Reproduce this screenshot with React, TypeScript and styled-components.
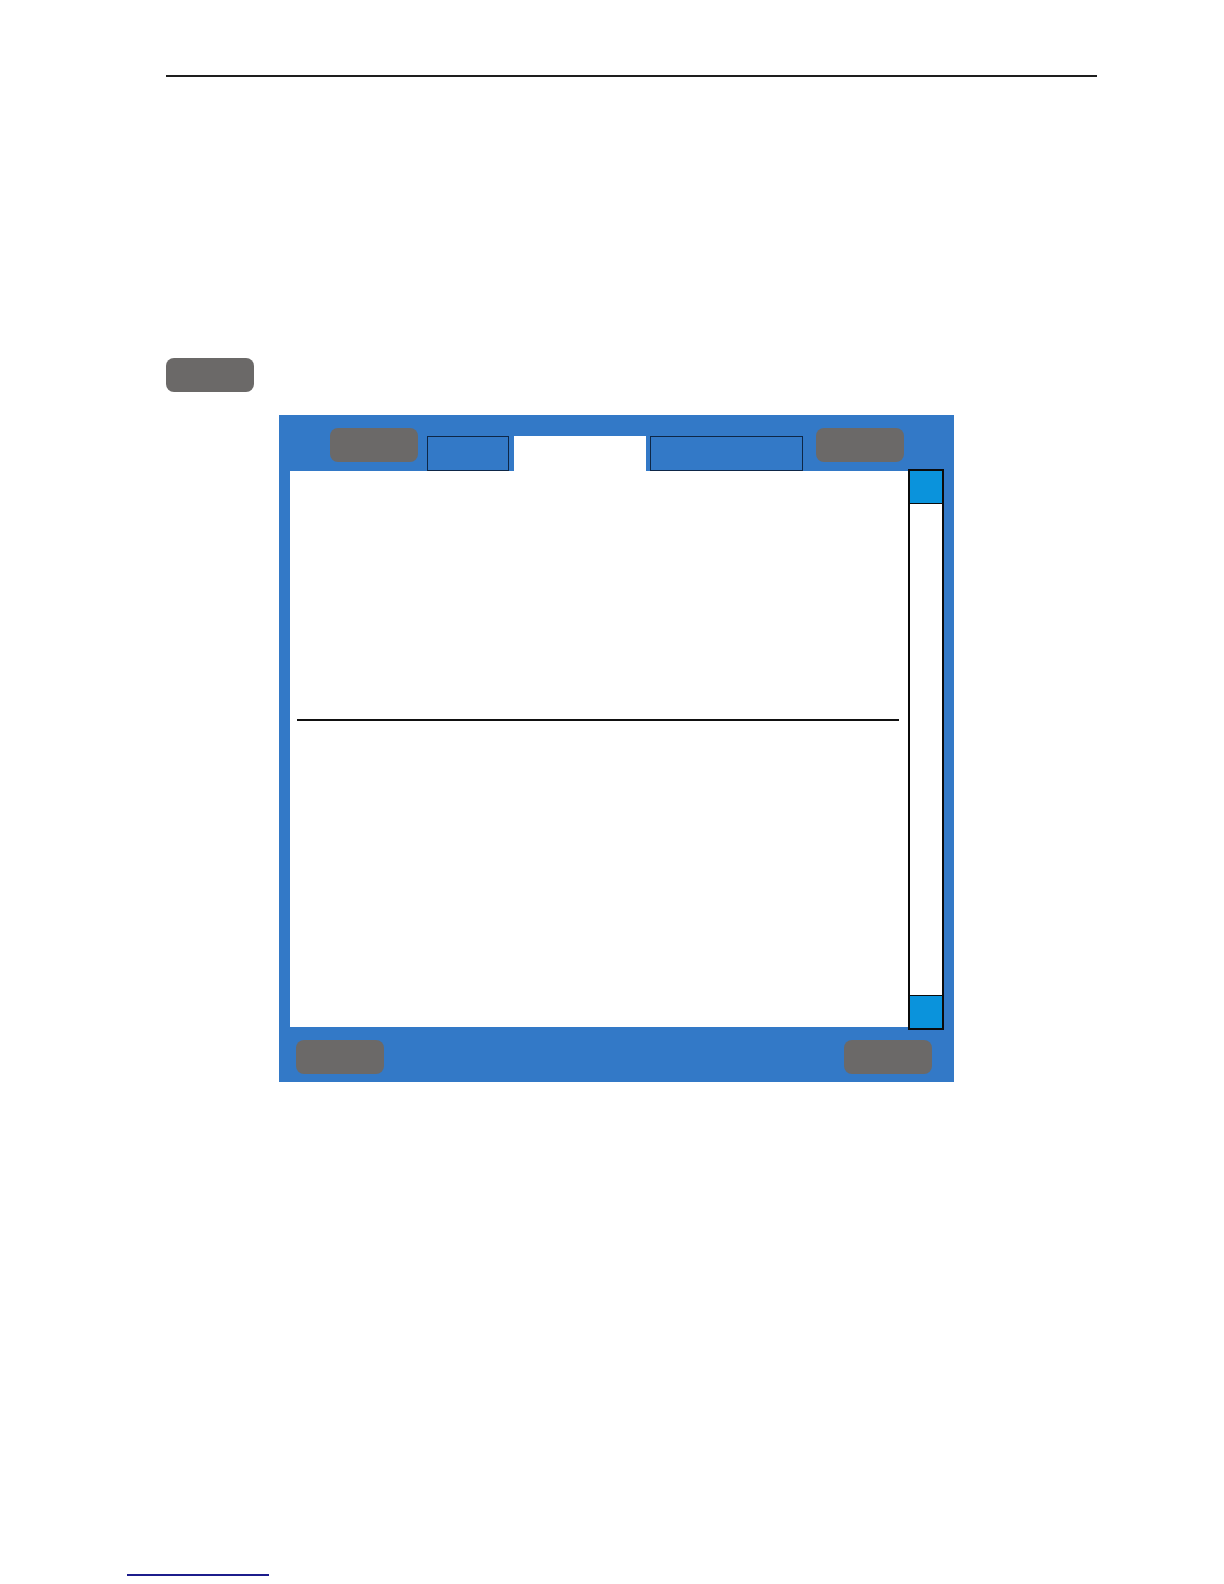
import React from 'react';
import styled, { createGlobalStyle } from 'styled-components';

const GlobalStyle = createGlobalStyle`
  html, body {
    margin: 0;
    padding: 0;
    background: #ffffff;
    font-family: "Liberation Sans", Arial, sans-serif;
  }
`;

const Page = styled.div`
  position: relative;
  width: 1224px;
  height: 1584px;
  padding-top: 75px;
  box-sizing: border-box;
`;

const TopRule = styled.div`
  margin-left: 166px;
  width: 931px;
  height: 2px;
  background: #1e1e1e;
`;

const GreyButton = styled.div`
  width: 88px;
  height: 34px;
  border-radius: 8px;
  background: #6b6968;
  flex-shrink: 0;
`;

const LoneButton = styled(GreyButton)`
  margin-left: 166px;
  margin-top: 281px;
`;

const Panel = styled.div`
  margin-left: 279px;
  margin-top: 23px;
  width: 675px;
  height: 667px;
  background: #3379c7;
  display: flex;
  flex-direction: column;
`;

const TopBar = styled.div`
  height: 56px;
  display: flex;
  align-items: flex-end;
  padding-left: 51px;
  box-sizing: border-box;
`;

const TopButton = styled(GreyButton)<{ $gap?: number }>`
  align-self: flex-start;
  margin-top: 13px;
  margin-left: ${p => p.$gap || 0}px;
`;

const Tab = styled.div<{ $w: number; $active?: boolean; $gap: number }>`
  width: ${p => p.$w}px;
  height: 35px;
  margin-left: ${p => p.$gap}px;
  box-sizing: border-box;
  background: ${p => (p.$active ? '#ffffff' : '#3379c7')};
  border: ${p => (p.$active ? 'none' : '1.5px solid #0e2747')};
  flex-shrink: 0;
`;

const Body = styled.div`
  display: flex;
  align-items: center;
  padding-left: 11px;
  height: 556px;
`;

const Content = styled.div`
  width: 618px;
  height: 556px;
  background: #ffffff;
  padding: 248px 9px 0 7px;
  box-sizing: border-box;
`;

const Divider = styled.div`
  height: 2px;
  background: #111111;
`;

const Scrollbar = styled.div`
  width: 36px;
  height: 561px;
  box-sizing: border-box;
  border: 2px solid #0b0b0b;
  background: #ffffff;
  display: flex;
  flex-direction: column;
  justify-content: space-between;
`;

const Thumb = styled.div<{ $bottom?: boolean }>`
  height: 32px;
  background: #0a93dc;
  border-top: ${p => (p.$bottom ? '1.5px solid #0b0b0b' : 'none')};
  border-bottom: ${p => (p.$bottom ? 'none' : '1.5px solid #0b0b0b')};
`;

const BottomBar = styled.div`
  height: 55px;
  display: flex;
  justify-content: space-between;
  align-items: flex-start;
  padding: 13px 22px 0 17px;
  box-sizing: border-box;
`;

const FootLink = styled.div`
  position: absolute;
  left: 127px;
  top: 1574px;
  width: 142px;
  height: 1.5px;
  background: #1c1c8c;
`;

export default function App() {
  return (
    <>
      <GlobalStyle />
      <Page>
        <TopRule />
        <LoneButton />
        <Panel>
          <TopBar>
            <TopButton />
            <Tab $w={82} $gap={9} />
            <Tab $w={132} $gap={5} $active />
            <Tab $w={153} $gap={4} />
            <TopButton $gap={13} />
          </TopBar>
          <Body>
            <Content>
              <Divider />
            </Content>
            <Scrollbar>
              <Thumb />
              <Thumb $bottom />
            </Scrollbar>
          </Body>
          <BottomBar>
            <GreyButton />
            <GreyButton />
          </BottomBar>
        </Panel>
        <FootLink />
      </Page>
    </>
  );
}
